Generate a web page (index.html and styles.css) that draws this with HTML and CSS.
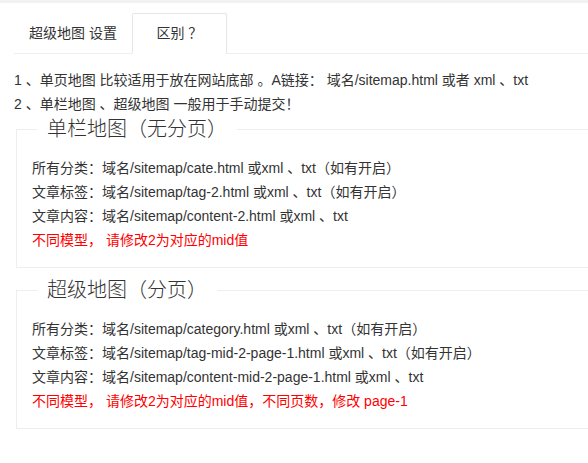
FILE: index.html
```html
<!DOCTYPE html>
<html lang="zh-CN">
<head>
    <meta charset="UTF-8">
    <meta name="viewport" content="width=device-width, initial-scale=1.0">
    <title>超级地图</title>
    <link rel="stylesheet" href="styles.css">
</head>
<body>

<div class="topbar"></div>

<div class="page">
    <ul class="tab-title">
        <li>超级地图 设置</li>
        <li class="active">区别 ？</li>
    </ul>

    <div class="tab-content">
        <p>1 、单页地图 比较适用于放在网站底部 。A链接： 域名/sitemap.html 或者 xml 、txt</p>
        <p>2 、单栏地图 、超级地图 一般用于手动提交！</p>

        <fieldset class="elem-field">
            <legend>单栏地图（无分页）</legend>
            <div class="field-box">
                <p>所有分类：域名/sitemap/cate.html 或xml 、txt（如有开启）</p>
                <p>文章标签：域名/sitemap/tag-2.html 或xml 、txt（如有开启）</p>
                <p>文章内容：域名/sitemap/content-2.html 或xml 、txt</p>
                <p class="red">不同模型， 请修改2为对应的mid值</p>
            </div>
        </fieldset>

        <fieldset class="elem-field">
            <legend>超级地图（分页）</legend>
            <div class="field-box">
                <p>所有分类：域名/sitemap/category.html 或xml 、txt（如有开启）</p>
                <p>文章标签：域名/sitemap/tag-mid-2-page-1.html 或xml 、txt（如有开启）</p>
                <p>文章内容：域名/sitemap/content-mid-2-page-1.html 或xml 、txt</p>
                <p class="red">不同模型， 请修改2为对应的mid值，不同页数，修改 page-1</p>
            </div>
        </fieldset>
    </div>
</div>

</body>
</html>
```

FILE: styles.css
```css
body {
    margin: 0;
    font-family: "Liberation Sans", "Noto Sans CJK SC", sans-serif;
    font-size: 14px;
    color: #333;
    background: #fff;
}

.topbar {
    height: 3px;
    background: #f2f2f2;
}

.page {
    padding: 10px 0 0 14px;
}

.tab-title {
    display: flex;
    align-items: flex-start;
    height: 40px;
    margin: 0;
    padding: 0;
    list-style: none;
    border-bottom: 1px solid #eee;
}

.tab-title li {
    min-width: 65px;
    padding: 0 15px;
    line-height: 40px;
    text-align: center;
}

.tab-title li.active {
    box-sizing: border-box;
    min-width: 95px;
    height: 41px;
    line-height: 39px;
    border: 1px solid #e6e6e6;
    border-bottom-color: #fff;
    border-radius: 2px 2px 0 0;
}

.tab-content {
    padding-top: 14px;
}

.tab-content p {
    margin: 0;
    line-height: 24px;
}

/* fieldset runs past the right edge in the original, so no right border */
.elem-field {
    margin: 1px 0 10px 2px;
    padding: 0;
    border: 1px solid #eee;
    border-right: none;
    min-width: 0;
}

.elem-field legend {
    margin-left: 20px;
    padding: 0 10px;
    font-size: 20px;
    line-height: 24px;
    font-weight: 300;
}

.field-box {
    padding: 15px;
}

.field-box .red {
    color: #f00;
}
```
